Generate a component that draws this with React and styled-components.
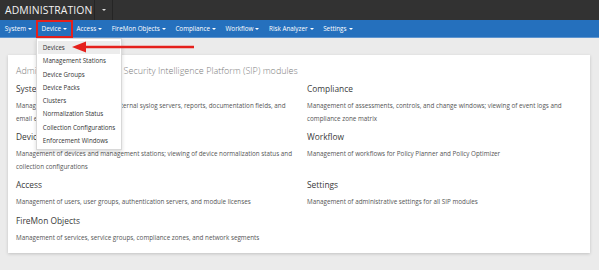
import React from "react";
import styled, { createGlobalStyle } from "styled-components";

const GlobalStyle = createGlobalStyle`
  html, body {
    margin: 0;
    padding: 0;
    background: #ebebeb;
    font-family: "Open Sans", "Liberation Sans", sans-serif;
  }
  * { box-sizing: border-box; }
`;

const Page = styled.div`
  width: 599px;
  height: 270px;
  overflow: hidden;
  position: relative;
  background: #ebebeb;
`;

const TopBar = styled.div`
  height: 20px;
  background: #323232;
  display: flex;
  align-items: stretch;
`;

const Brand = styled.div`
  color: #f2f2f2;
  font-size: 10.4px;
  letter-spacing: 0.1px;
  line-height: 20px;
  width: 95px;
  padding-left: 5px;
  border-right: 1px solid #252525;
`;

const BrandToggle = styled.div`
  width: 18px;
  border-right: 1px solid #252525;
  display: flex;
  align-items: center;
  justify-content: center;
`;

const Caret = styled.span`
  display: inline-block;
  width: 0;
  height: 0;
  margin-left: ${(p) => p.gap ?? 2}px;
  border-left: ${(p) => p.size || 2}px solid transparent;
  border-right: ${(p) => p.size || 2}px solid transparent;
  border-top: ${(p) => p.size || 2}px solid ${(p) => p.color || "#fff"};
  vertical-align: middle;
`;

const NavBar = styled.div`
  height: 18px;
  background: #2570bd;
  border-bottom: 1px solid #5d94cf;
  display: flex;
  align-items: stretch;
`;

const NavItem = styled.div`
  position: relative;
  color: #fff;
  font-size: 6.3px;
  line-height: 17px;
  padding: 0 4.8px;
  white-space: nowrap;
  ${(p) =>
    p.marked &&
    `
    outline: 2px solid #e5201c;
    outline-offset: -1px;
    margin-top: 1px;
    line-height: 16px;
  `}
`;

const Menu = styled.div`
  position: absolute;
  top: 17px;
  left: -1px;
  width: 86px;
  background: #fff;
  border: 1px solid #d8d8d8;
  box-shadow: 0 2px 4px rgba(0, 0, 0, 0.15);
  padding: 2px 1px;
  z-index: 5;
`;

const MenuItem = styled.div`
  font-size: 6.2px;
  color: #333;
  line-height: 13.3px;
  padding-left: 5px;
  background: ${(p) => (p.active ? "#ececec" : "transparent")};
`;

const Band = styled.div`
  padding: 17px 9px 0 8px;
`;

const Card = styled.div`
  background: #fff;
  height: 198px;
  box-shadow: 0 1px 3px rgba(0, 0, 0, 0.18);
  padding: 9px 8px 0 8px;
`;

const Title = styled.div`
  font-size: 9px;
  font-weight: 300;
  color: #7d7d7d;
  line-height: 14px;
  margin-bottom: 4px;
`;

const Grid = styled.div`
  display: grid;
  grid-template-columns: 291px 1fr;
`;

const Module = styled.div`
  margin-bottom: 5px;
  padding-right: 10px;
`;

const ModuleName = styled.div`
  font-size: 8.4px;
  color: #3a3a3a;
  line-height: 13px;
  margin-bottom: 5px;
`;

const ModuleText = styled.div`
  font-size: 6.3px;
  color: #555;
  line-height: 12.5px;
`;

const Arrow = styled.svg`
  position: absolute;
  left: 70px;
  top: 40px;
  z-index: 6;
`;

const navItems = [
  "System",
  "Device",
  "Access",
  "FireMon Objects",
  "Compliance",
  "Workflow",
  "Risk Analyzer",
  "Settings",
];

const deviceMenu = [
  "Devices",
  "Management Stations",
  "Device Groups",
  "Device Packs",
  "Clusters",
  "Normalization Status",
  "Collection Configurations",
  "Enforcement Windows",
];

const rows = [
  [
    {
      name: "System",
      text: "Management of general settings, external syslog servers, reports, documentation fields, and email exports",
    },
    {
      name: "Compliance",
      text: "Management of assessments, controls, and change windows; viewing of event logs and compliance zone matrix",
    },
  ],
  [
    {
      name: "Device",
      text: "Management of devices and management stations; viewing of device normalization status and collection configurations",
    },
    {
      name: "Workflow",
      text: "Management of workflows for Policy Planner and Policy Optimizer",
    },
  ],
  [
    {
      name: "Access",
      text: "Management of users, user groups, authentication servers, and module licenses",
    },
    {
      name: "Settings",
      text: "Management of administrative settings for all SIP modules",
    },
  ],
  [
    {
      name: "FireMon Objects",
      text: "Management of services, service groups, compliance zones, and network segments",
    },
    null,
  ],
];

export default function App() {
  return (
    <Page>
      <GlobalStyle />
      <TopBar>
        <Brand>ADMINISTRATION</Brand>
        <BrandToggle>
          <Caret size={2.5} gap={0} color="#ddd" />
        </BrandToggle>
      </TopBar>
      <NavBar>
        {navItems.map((item) => (
          <NavItem key={item} marked={item === "Device"}>
            {item}
            <Caret />
            {item === "Device" && (
              <Menu>
                {deviceMenu.map((m, i) => (
                  <MenuItem key={m} active={i === 0}>
                    {m}
                  </MenuItem>
                ))}
              </Menu>
            )}
          </NavItem>
        ))}
      </NavBar>
      <Band>
        <Card>
          <Title>
            Administration of FireMon Security Intelligence Platform (SIP)
            modules
          </Title>
          <Grid>
            {rows.map((row) =>
              row.map((mod, i) =>
                mod ? (
                  <Module key={mod.name}>
                    <ModuleName>{mod.name}</ModuleName>
                    <ModuleText>{mod.text}</ModuleText>
                  </Module>
                ) : (
                  <div key={"empty" + i} />
                )
              )
            )}
          </Grid>
        </Card>
      </Band>
      <Arrow width="126" height="14" viewBox="0 0 126 14">
        <line x1="14" y1="7" x2="124" y2="7" stroke="#e5201c" strokeWidth="2.4" />
        <polygon points="2,7 16,1.5 16,12.5" fill="#e5201c" />
      </Arrow>
    </Page>
  );
}
